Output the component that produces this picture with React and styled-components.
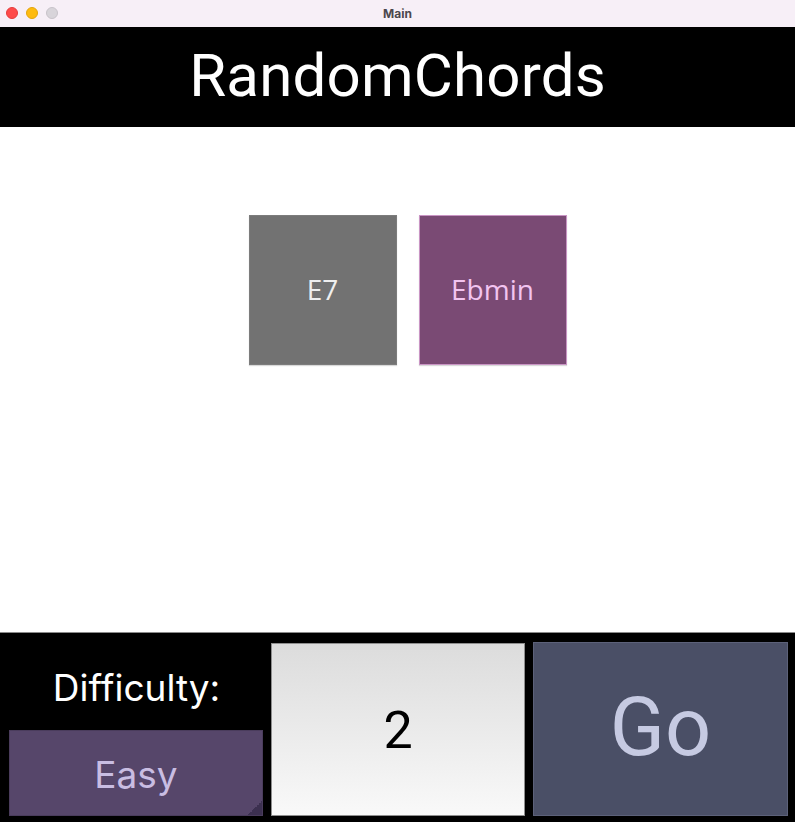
import React from 'react';
import styled, { createGlobalStyle } from 'styled-components';

const GlobalStyle = createGlobalStyle`
    html, body {
        margin: 0;
        padding: 0;
        background: #000;
    }
    * {
        box-sizing: border-box;
    }
`;

const Window = styled.div`
    display: flex;
    flex-direction: column;
    width: 795px;
    height: 822px;
    overflow: hidden;
    font-family: Roboto, "Liberation Sans", sans-serif;
`;

const TitleBar = styled.div`
    position: relative;
    display: flex;
    align-items: center;
    justify-content: center;
    height: 27px;
    background: #f7eff7;
    font-family: Inter, "Liberation Sans", sans-serif;
    font-size: 12px;
    font-weight: 700;
    color: #4b474d;
`;

const Lights = styled.div`
    position: absolute;
    left: 6px;
    top: 7px;
    display: flex;
    gap: 8px;
`;

const Light = styled.span`
    width: 12px;
    height: 12px;
    border-radius: 50%;
    background: ${p => p.$color};
    border: 1px solid ${p => p.$edge};
`;

const Header = styled.header`
    display: flex;
    align-items: center;
    justify-content: center;
    height: 100px;
    background: #000;
    color: #fff;
    font-size: 60px;
    font-weight: 400;
    letter-spacing: 0.2px;
    padding-bottom: 4px;
`;

const Stage = styled.main`
    flex: 1;
    display: flex;
    justify-content: center;
    align-items: flex-start;
    gap: 22px;
    padding: 88px 0 0 20px;
    background: #fff;
    border-bottom: 1px solid #8a8a8a;
`;

const Chord = styled.div`
    display: flex;
    align-items: center;
    justify-content: center;
    width: 148px;
    height: 150px;
    background: ${p => p.$bg};
    color: ${p => p.$fg};
    border: 1px solid ${p => p.$edge};
    box-shadow: 0 1px 1px rgba(0, 0, 0, 0.15);
    font-family: "Open Sans", "Noto Sans", sans-serif;
    font-size: 28px;
    padding-bottom: 2px;
`;

const Footer = styled.footer`
    display: grid;
    grid-template-columns: 254px 254px 255px;
    column-gap: 8px;
    height: 189px;
    padding: 10px 8px 6px 9px;
    background: #000;
`;

const LeftColumn = styled.div`
    display: grid;
    grid-template-rows: 87px 1fr;
`;

const Label = styled.div`
    display: flex;
    align-items: center;
    justify-content: center;
    color: #fff;
    font-family: Inter, Roboto, sans-serif;
    font-size: 37px;
    padding: 2px 0 0 1px;
`;

const DifficultyButton = styled.button`
    position: relative;
    display: flex;
    align-items: center;
    justify-content: center;
    background: #56466a;
    color: #c9bde2;
    border: 1px solid #4a3c5c;
    font-family: Inter, Roboto, sans-serif;
    font-size: 37px;
    padding: 3px 0 0;
    overflow: hidden;

    &::after {
        content: '';
        position: absolute;
        right: 0;
        bottom: 0;
        width: 14px;
        height: 14px;
        background: linear-gradient(135deg, transparent 50%, #3c3050 50%);
    }
`;

const CountBox = styled.div`
    display: flex;
    align-items: center;
    justify-content: center;
    background: linear-gradient(#dcdcdc, #f9f9f9);
    border: 1px solid #8e8e8e;
    color: #000;
    font-size: 52px;
    padding-top: 1px;
`;

const GoButton = styled.button`
    display: flex;
    align-items: center;
    justify-content: center;
    margin-top: -1px;
    background: #4a4f66;
    border: 1px solid #5c6179;
    color: #c6cae2;
    font-family: Roboto, "Liberation Sans", sans-serif;
    font-size: 81px;
    padding: 0 0 4px;
`;

export default function App() {
    return (
        <Window>
            <GlobalStyle />
            <TitleBar>
                <Lights>
                    <Light $color="#fe4a4a" $edge="#e53c3c" />
                    <Light $color="#febb10" $edge="#e4a50c" />
                    <Light $color="#d8d4da" $edge="#c8c3ca" />
                </Lights>
                Main
            </TitleBar>
            <Header>RandomChords</Header>
            <Stage>
                <Chord $bg="#727272" $fg="#efefef" $edge="#7c7c7c">E7</Chord>
                <Chord $bg="#7a4a74" $fg="#f2c4f0" $edge="#c995c4">Ebmin</Chord>
            </Stage>
            <Footer>
                <LeftColumn>
                    <Label>Difficulty:</Label>
                    <DifficultyButton>Easy</DifficultyButton>
                </LeftColumn>
                <CountBox>2</CountBox>
                <GoButton>Go</GoButton>
            </Footer>
        </Window>
    );
}
